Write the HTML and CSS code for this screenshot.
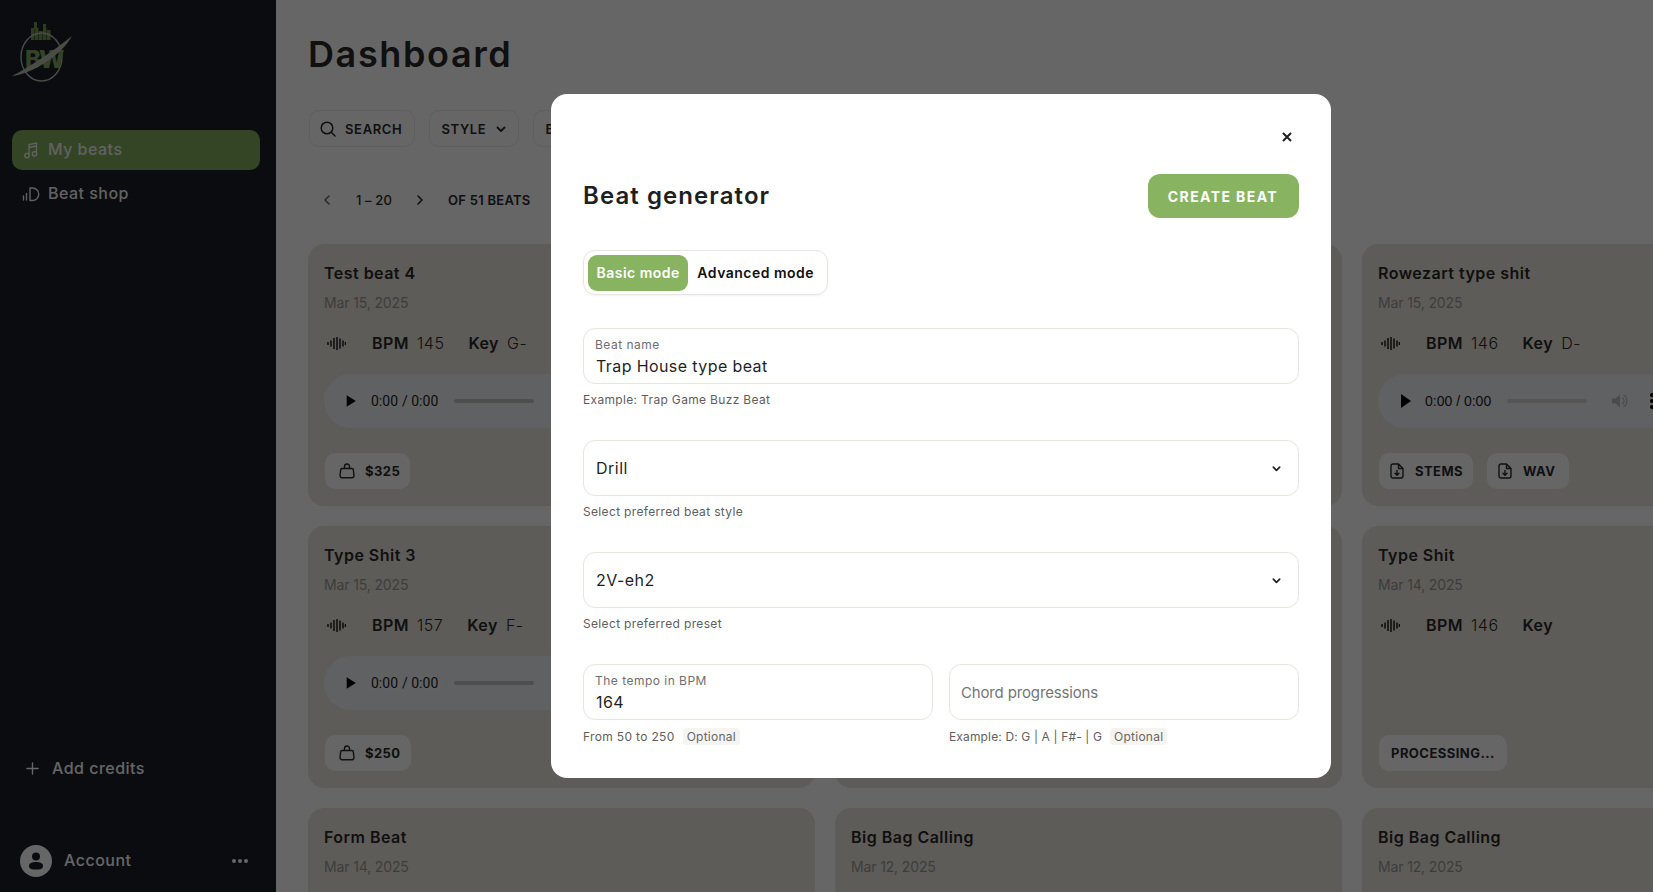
FILE: index.html
```html
<!DOCTYPE html>
<html lang="en">
<head>
<meta charset="UTF-8">
<title>Dashboard</title>
<link rel="stylesheet" href="styles.css">
</head>
<body>
<svg class="sprite" width="0" height="0">
  <symbol id="chev-down" viewBox="0 0 12 12"><path d="M2.5 4.5 6 8l3.5-3.5" fill="none" stroke="currentColor" stroke-width="1.8" stroke-linecap="round" stroke-linejoin="round"/></symbol>
  <symbol id="wave" viewBox="0 0 19 13"><path d="M1 5v3M4 3.500v6M7 1v11M10 0v13M13 1.500v10M16 3.500v6M18.500 5v3" fill="none" stroke="currentColor" stroke-width="1.6"/></symbol>
  <symbol id="bag" viewBox="0 0 16 16"><path d="M3 5.500h10c.8 0 1.200.5 1.300 1.200l.7 5.800a2 2 0 0 1-2 2.200H3a2 2 0 0 1-2-2.200l.7-5.800C1.800 6 2.200 5.500 3 5.500zM5.500 5.500V3.500a2.500 2.500 0 0 1 5 0v2" fill="none" stroke="currentColor" stroke-width="1.4" stroke-linejoin="round"/></symbol>
  <symbol id="file" viewBox="0 0 14 16"><path d="M3 1h5.500L13 5.500V13a2 2 0 0 1-2 2H3a2 2 0 0 1-2-2V3a2 2 0 0 1 2-2zM8.500 1v4.500H13M7 7.500v4.500M5 10.200 7 12.200l2-2" fill="none" stroke="currentColor" stroke-width="1.4" stroke-linejoin="round" stroke-linecap="round"/></symbol>
</svg>

<div class="app">
  <aside class="sidebar">
    <svg class="logo" viewBox="0 0 60 62">
      <g fill="#6f9a4c">
        <rect x="22" y="0" width="3" height="7"/><rect x="31" y="2" width="3" height="5"/>
        <rect x="19" y="6" width="3.500" height="12"/><rect x="23" y="6" width="3.500" height="12"/><rect x="27" y="9" width="3.500" height="9"/><rect x="31" y="6" width="3.500" height="12"/><rect x="35" y="8" width="3.500" height="10"/>
      </g>
      <ellipse cx="29.500" cy="35" rx="20.500" ry="24" fill="none" stroke="#b9bdb0" stroke-width="1.400"/>
      <text x="13" y="46" class="logo-text">BW</text>
      <path d="M0 54C18 45 44 27 60 14 50 33 20 52 0 54z" fill="#b9bdb0"/>
    </svg>
    <nav class="nav">
      <a class="nav-item active">
        <svg class="nav-icon" viewBox="0 0 16 18"><path d="M6 14V3.500l7.500-1.500v10.500M6 6.500 13.500 5" fill="none" stroke="currentColor" stroke-width="1.300"/><circle cx="4" cy="14.500" r="2.200" fill="none" stroke="currentColor" stroke-width="1.300"/><circle cx="11.500" cy="12.800" r="2.200" fill="none" stroke="currentColor" stroke-width="1.300"/></svg>
        <span class="nav-label">My beats</span>
      </a>
      <a class="nav-item">
        <svg class="nav-icon" viewBox="0 0 18 16"><path d="M1.500 10v4M4.500 7.500V14M8 2h2.500a6 6 0 0 1 0 12.500H8z" fill="none" stroke="currentColor" stroke-width="1.400" stroke-linecap="round" stroke-linejoin="round"/></svg>
        <span class="nav-label">Beat shop</span>
      </a>
    </nav>
    <a class="credits">
      <svg class="plus" viewBox="0 0 14 14"><path d="M7 1v12M1 7h12" fill="none" stroke="currentColor" stroke-width="1.500" stroke-linecap="round"/></svg>
      Add credits
    </a>
    <div class="account">
      <span class="avatar">
        <svg viewBox="0 0 32 32"><circle cx="16" cy="11.500" r="4" fill="#191e26"/><path d="M9 21c0-3 3-4 7-4s7 1 7 4-3 3.500-7 3.500-7-.5-7-3.500z" fill="#191e26"/></svg>
      </span>
      <span class="account-name">Account</span>
      <span class="dots"><i></i><i></i><i></i></span>
    </div>
  </aside>

  <main class="main">
    <h1 class="page-title">Dashboard</h1>
    <div class="filters">
      <button class="chip">
        <svg class="chip-icon" viewBox="0 0 16 16"><circle cx="7" cy="7" r="5.800" fill="none" stroke="currentColor" stroke-width="1.500"/><path d="m11.300 11.300 3.700 3.700" stroke="currentColor" stroke-width="1.500" stroke-linecap="round"/></svg>
        Search
      </button>
      <button class="chip">Style <svg class="chev"><use href="#chev-down"/></svg></button>
      <button class="chip">BPM <svg class="chev"><use href="#chev-down"/></svg></button>
    </div>
    <div class="pager">
      <svg class="pager-arrow first" viewBox="0 0 8 12"><path d="M6 2 2 6l4 4" fill="none" stroke="currentColor" stroke-width="1.600" stroke-linecap="round" stroke-linejoin="round"/></svg>
      <span class="pager-range">1 – 20</span>
      <svg class="pager-arrow" viewBox="0 0 8 12"><path d="m2 2 4 4-4 4" fill="none" stroke="currentColor" stroke-width="1.600" stroke-linecap="round" stroke-linejoin="round"/></svg>
      <span class="pager-total">OF 51 BEATS</span>
    </div>

    <div class="cards">
      <article class="card">
        <h3 class="card-title">Test beat 4</h3>
        <div class="card-date">Mar 15, 2025</div>
        <div class="meta"><svg class="wave"><use href="#wave"/></svg><b>BPM</b><span>145</span><b class="key">Key</b><span>G-</span></div>
        <audio class="player" controls preload="none" src="test-beat-4.mp3"></audio>
        <div class="actions"><button class="btn"><svg class="btn-icon"><use href="#bag"/></svg>$325</button></div>
      </article>
      <article class="card"></article>
      <article class="card">
        <h3 class="card-title">Rowezart type shit</h3>
        <div class="card-date">Mar 15, 2025</div>
        <div class="meta"><svg class="wave"><use href="#wave"/></svg><b>BPM</b><span>146</span><b class="key">Key</b><span>D-</span></div>
        <div class="player pill">
          <svg class="pill-play" viewBox="0 0 10 14"><path d="M0 0v14l10-7z"/></svg>
          <span class="pill-time">0:00 / 0:00</span>
          <span class="pill-track"></span>
          <svg class="pill-volume" viewBox="0 0 16 14"><path d="M0 4.500h3.500L8 .5v13l-4.500-4H0z"/><path d="M10 3.500a4 4 0 0 1 0 7M11.500 1a7 7 0 0 1 0 12" fill="none" stroke="currentColor" stroke-width="1.300"/></svg>
          <span class="pill-menu"><i></i><i></i><i></i></span>
        </div>
        <div class="actions">
          <button class="btn"><svg class="btn-icon file"><use href="#file"/></svg>STEMS</button>
          <button class="btn wav"><svg class="btn-icon file"><use href="#file"/></svg>WAV</button>
        </div>
      </article>

      <article class="card">
        <h3 class="card-title">Type Shit 3</h3>
        <div class="card-date">Mar 15, 2025</div>
        <div class="meta"><svg class="wave"><use href="#wave"/></svg><b>BPM</b><span>157</span><b class="key">Key</b><span>F-</span></div>
        <audio class="player" controls preload="none" src="type-shit-3.mp3"></audio>
        <div class="actions"><button class="btn"><svg class="btn-icon"><use href="#bag"/></svg>$250</button></div>
      </article>
      <article class="card"></article>
      <article class="card">
        <h3 class="card-title">Type Shit</h3>
        <div class="card-date">Mar 14, 2025</div>
        <div class="meta"><svg class="wave"><use href="#wave"/></svg><b>BPM</b><span>146</span><b class="key">Key</b></div>
        <div class="actions push"><button class="btn text-only">PROCESSING...</button></div>
      </article>

      <article class="card">
        <h3 class="card-title">Form Beat</h3>
        <div class="card-date">Mar 14, 2025</div>
      </article>
      <article class="card">
        <h3 class="card-title">Big Bag Calling</h3>
        <div class="card-date">Mar 12, 2025</div>
      </article>
      <article class="card">
        <h3 class="card-title">Big Bag Calling</h3>
        <div class="card-date">Mar 12, 2025</div>
      </article>
    </div>
  </main>
</div>

<div class="overlay">
  <section class="modal">
    <div class="modal-close">
      <svg viewBox="0 0 12 12"><path d="m2 2 8 8M10 2l-8 8" fill="none" stroke="currentColor" stroke-width="2"/></svg>
    </div>
    <header class="modal-head">
      <h2>Beat generator</h2>
      <button class="create">CREATE BEAT</button>
    </header>
    <div class="modes">
      <button class="mode on">Basic mode</button>
      <button class="mode">Advanced mode</button>
    </div>

    <div class="group">
      <label class="field">
        <span class="field-label">Beat name</span>
        <input value="Trap House type beat">
      </label>
      <p class="hint">Example: Trap Game Buzz Beat</p>
    </div>
    <div class="group">
      <div class="field select"><span>Drill</span><svg class="select-chev"><use href="#chev-down"/></svg></div>
      <p class="hint">Select preferred beat style</p>
    </div>
    <div class="group">
      <div class="field select"><span>2V-eh2</span><svg class="select-chev"><use href="#chev-down"/></svg></div>
      <p class="hint">Select preferred preset</p>
    </div>
    <div class="two-col">
      <div>
        <label class="field">
          <span class="field-label">The tempo in BPM</span>
          <input value="164">
        </label>
        <p class="hint">From 50 to 250 <span class="tag">Optional</span></p>
      </div>
      <div>
        <label class="field plain">
          <input placeholder="Chord progressions">
        </label>
        <p class="hint tight">Example: D: G | A | F#- | G <span class="tag">Optional</span></p>
      </div>
    </div>
  </section>
</div>
</body>
</html>
```

FILE: styles.css
```css
* {
  box-sizing: border-box;
}

html, body {
  height: 100%;
}

body {
  margin: 0;
  overflow: hidden;
  background: #fff;
  color: #2a2a2a;
  font-family: Inter, "Noto Sans", sans-serif;
  letter-spacing: 0.03em;
}

button {
  font: inherit;
  letter-spacing: inherit;
  color: inherit;
  border: 0;
  cursor: pointer;
}

.sprite {
  display: none;
}

.app {
  display: flex;
  height: 892px;
}

/* sidebar */
.sidebar {
  flex: 0 0 276px;
  display: flex;
  flex-direction: column;
  padding: 22px 16px 15px 12px;
  background: #191e26;
  color: #fff;
}

.logo {
  width: 60px;
  height: 62px;
  flex: none;
}

.logo-text {
  font-size: 24px;
  font-weight: 800;
  fill: #80ab5c;
  letter-spacing: -2px;
}

.nav {
  display: flex;
  flex-direction: column;
  gap: 4px;
  margin-top: 46px;
}

.nav-item {
  display: flex;
  align-items: center;
  gap: 8px;
  height: 40px;
  padding-left: 10px;
  border-radius: 10px;
  font-size: 16px;
  font-weight: 500;
  opacity: 0.95;
}

.nav-item.active {
  background: #88b462;
}

.nav-label {
  padding-bottom: 2px;
}

.nav-icon {
  width: 18px;
  height: 18px;
  flex: none;
}

.credits {
  display: flex;
  align-items: center;
  gap: 13px;
  margin-top: auto;
  margin-left: 14px;
  font-size: 16px;
  font-weight: 500;
}

.plus {
  width: 13px;
  height: 13px;
}

.account {
  display: flex;
  align-items: center;
  margin-top: 67px;
  margin-left: 8px;
  font-size: 16px;
  font-weight: 500;
}

.avatar {
  width: 32px;
  height: 32px;
  border-radius: 50%;
  background: #fff;
  margin-right: 12px;
}

.avatar svg {
  display: block;
}

.account-name {
  flex: 1;
  padding-bottom: 2px;
}

.dots {
  display: flex;
  gap: 2px;
  margin-right: 12px;
}

.dots i {
  width: 4px;
  height: 4px;
  border-radius: 50%;
  background: #fff;
}

/* main */
.main {
  flex: 1;
  min-width: 0;
  padding: 32px 0 0 32px;
  overflow: hidden;
}

.page-title {
  margin: 0;
  font-size: 36px;
  line-height: 44px;
  font-weight: 600;
  letter-spacing: 0.045em;
}

.filters {
  display: flex;
  gap: 14px;
  margin-top: 34px;
  margin-left: 1px;
}

.chip {
  display: flex;
  align-items: center;
  gap: 9px;
  height: 37px;
  padding: 0 12px 0 10px;
  background: #fff;
  border: 1px solid #f0eee8;
  border-radius: 10px;
  font-size: 13px;
  font-weight: 600;
  letter-spacing: 0.05em;
  text-transform: uppercase;
}

.chip + .chip {
  padding: 0 11px;
}

.chip-icon {
  width: 16px;
  height: 16px;
}

.chev {
  width: 12px;
  height: 12px;
}

.pager {
  display: flex;
  align-items: center;
  height: 24px;
  margin-top: 41px;
  font-size: 13px;
  font-weight: 500;
}

.pager-arrow {
  width: 8px;
  height: 12px;
}

.pager-arrow.first {
  margin-left: 15px;
  opacity: 0.7;
}

.pager-range {
  margin: 0 24px 0 25px;
  letter-spacing: 0.01em;
}

.pager-total {
  margin-left: 24px;
  font-weight: 600;
  letter-spacing: 0.02em;
}

.cards {
  display: grid;
  grid-template-columns: repeat(3, 507px);
  grid-auto-rows: 262px;
  gap: 20px;
  margin-top: 32px;
}

.card {
  display: flex;
  flex-direction: column;
  padding: 16px 16px 17px;
  background: #ebe6dc;
  border-radius: 16px;
}

.card-title {
  margin: 0;
  font-size: 16px;
  line-height: 26px;
  font-weight: 600;
}

.card-date {
  margin-top: 7px;
  font-size: 14px;
  line-height: 20px;
  letter-spacing: -0.01em;
  color: #999;
}

.meta {
  display: flex;
  align-items: center;
  height: 24px;
  margin-top: 18px;
  font-size: 16px;
}

.meta b {
  font-weight: 600;
}

.meta span {
  margin-left: 8px;
  font-weight: 300;
}

.meta .key {
  margin-left: 24px;
}

.wave {
  width: 19px;
  height: 13px;
  margin: 0 26px 0 3px;
}

.player {
  display: block;
  width: 300px;
  height: 54px;
  margin-top: 19px;
  flex: none;
}

.pill {
  display: flex;
  align-items: center;
  padding-left: 23px;
  background: #f1f3f4;
  border-radius: 27px;
  font-family: "Liberation Sans", Arial, sans-serif;
  font-size: 14px;
  letter-spacing: 0;
  color: #222;
}

.pill-play {
  width: 10px;
  height: 14px;
  flex: none;
}

.pill-time {
  margin-left: 14px;
  white-space: nowrap;
}

.pill-track {
  width: 80px;
  height: 4px;
  margin-left: 16px;
  flex: none;
  background: #d5d5d5;
  border-radius: 2px;
}

.pill-volume {
  width: 16px;
  height: 14px;
  margin-left: 25px;
  flex: none;
  fill: #bbb;
  color: #bbb;
}

.pill-menu {
  display: flex;
  flex-direction: column;
  gap: 2px;
  margin-left: 22px;
  flex: none;
}

.pill-menu i {
  width: 4px;
  height: 4px;
  border-radius: 50%;
  background: #000;
}

.actions {
  display: flex;
  gap: 14px;
  margin-top: 25px;
  margin-left: 1px;
}

.actions.push {
  margin-top: auto;
}

.btn {
  display: flex;
  align-items: center;
  gap: 10px;
  height: 36px;
  padding: 0 10px 0 13px;
  background: #fff;
  border-radius: 10px;
  font-size: 13px;
  font-weight: 700;
  letter-spacing: 0.035em;
}

.btn.text-only {
  padding: 0 12px;
}

.btn.wav {
  padding-right: 14px;
}

.btn-icon {
  width: 16px;
  height: 16px;
  margin-left: 1px;
}

.btn-icon.file {
  width: 14px;
  margin-left: -2px;
  margin-right: 1px;
}

/* modal */
.overlay {
  position: fixed;
  inset: 0;
  padding: 94px 0 0 551px;
  background: rgba(0, 0, 0, 0.6);
}

.modal {
  width: 780px;
  height: 684px;
  padding: 32px;
  background: #fff;
  border-radius: 16px;
  color: #1f1f1f;
}

.modal-close {
  display: flex;
  justify-content: flex-end;
  height: 22px;
  padding: 5px 6px 0 0;
}

.modal-close svg {
  width: 12px;
  height: 12px;
}

.modal-head {
  display: flex;
  align-items: center;
  justify-content: space-between;
  margin-top: 26px;
}

.modal-head h2 {
  margin: 0 0 2px;
  font-size: 24px;
  font-weight: 600;
  letter-spacing: 0.045em;
}

.create {
  height: 44px;
  padding: 0 21px 0 20px;
  background: #88b462;
  border-radius: 12px;
  color: #fff;
  font-size: 14px;
  font-weight: 700;
  letter-spacing: 0.1em;
}

.modes {
  display: inline-flex;
  align-items: center;
  gap: 9px;
  height: 45px;
  margin-top: 32px;
  padding: 0 13px 0 4px;
  border: 1px solid #e8e5df;
  border-radius: 12px;
  box-shadow: 0 1px 2px rgba(0, 0, 0, 0.05);
}

.mode {
  height: 36px;
  padding: 0;
  background: none;
  font-size: 14px;
  font-weight: 600;
  letter-spacing: 0.035em;
  color: #111;
}

.mode.on {
  padding: 0 8.5px;
  background: #88b462;
  border-radius: 9px;
  color: #fff;
}

.group {
  height: 112px;
}

.modes + .group {
  margin-top: 33px;
}

.field {
  display: flex;
  flex-direction: column;
  height: 56px;
  padding: 8px 12px 0;
  border: 1px solid #e8e5df;
  border-radius: 12px;
}

.field-label {
  margin-left: -1px;
  font-size: 12px;
  line-height: 15px;
  color: #6e6e6e;
}

.field input {
  width: 100%;
  margin-top: 3px;
  padding: 0;
  border: 0;
  outline: 0;
  background: none;
  font: inherit;
  font-size: 16px;
  line-height: 22px;
  letter-spacing: 0.025em;
  color: #1f1f1f;
}

.field.plain {
  padding: 0 11px;
  justify-content: center;
}

.field.plain input {
  margin-top: 0;
}

.field input::placeholder {
  font-size: 15px;
  letter-spacing: -0.01em;
  color: #757575;
}

.select {
  flex-direction: row;
  align-items: center;
  justify-content: space-between;
  padding-top: 0;
  font-size: 16px;
}

.select-chev {
  width: 11px;
  height: 11px;
  margin-right: 4px;
}

.hint {
  display: flex;
  align-items: center;
  gap: 8px;
  min-height: 18px;
  margin: 6px 0 0;
  font-size: 12px;
  letter-spacing: 0.028em;
  color: #5e5e5e;
}

.two-col .hint {
  margin-top: 7px;
}

.hint.tight {
  letter-spacing: 0.012em;
}

.tag {
  padding: 1px 4px;
  background: #f6f4f0;
  border-radius: 4px;
  letter-spacing: 0.02em;
  color: #666;
}

.two-col {
  display: grid;
  grid-template-columns: 1fr 1fr;
  gap: 16px;
}
```
